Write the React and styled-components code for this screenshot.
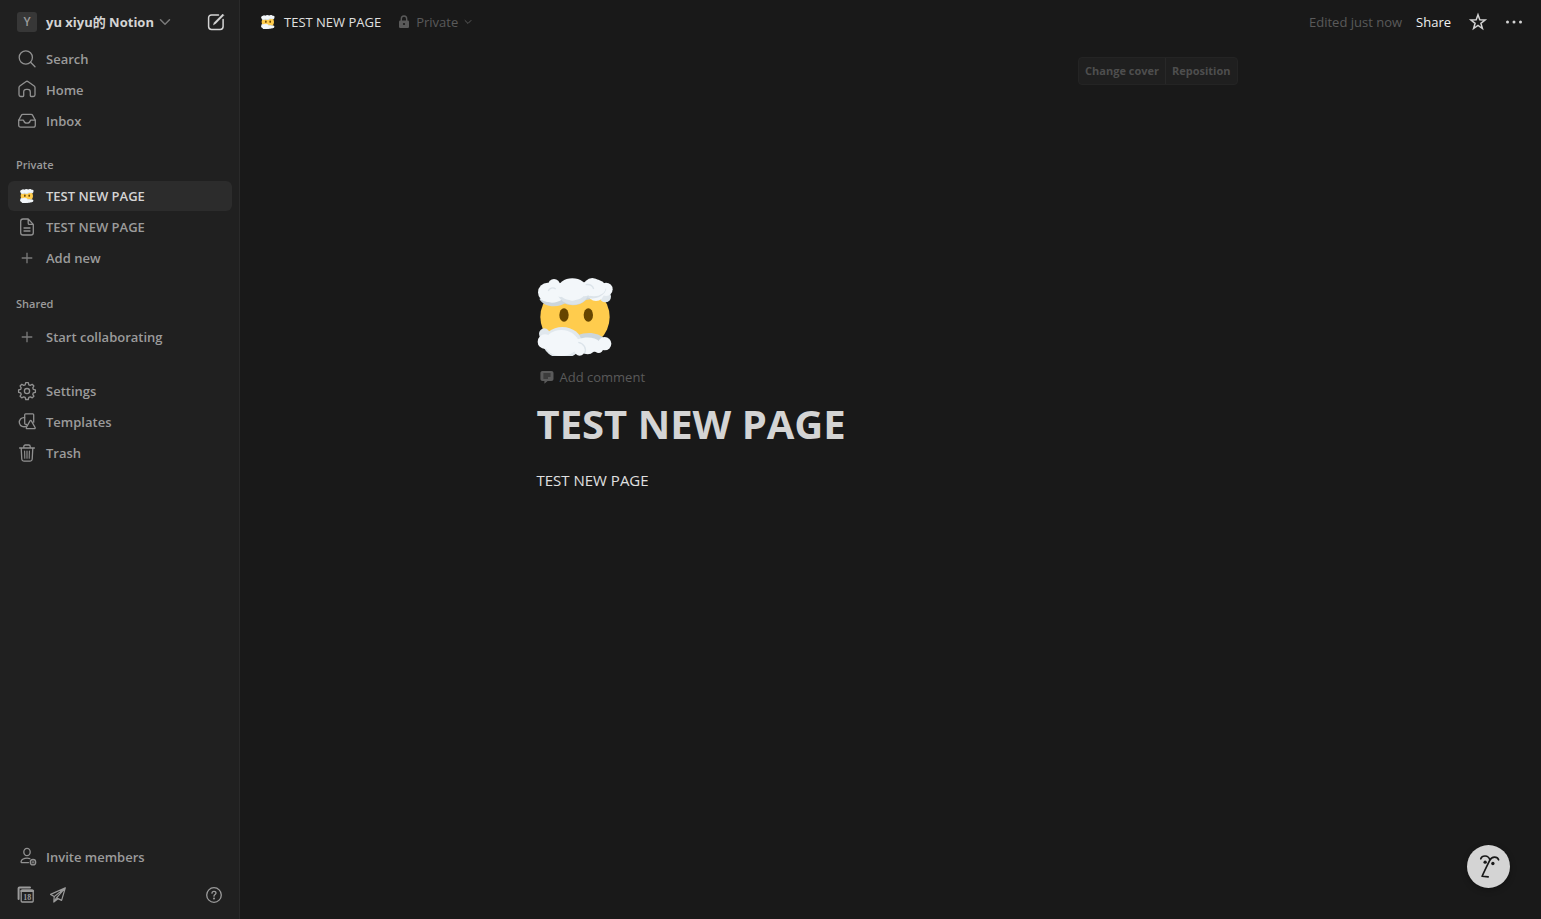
import React, {useState} from 'react';
import styled, {createGlobalStyle} from 'styled-components';

const GlobalStyle = createGlobalStyle`
    * {
        box-sizing: border-box;
    }

    body {
        margin: 0;
        background: #191919;
        color: #d4d4d4;
        font-family: "Open Sans", "Noto Sans CJK SC", sans-serif;
        font-size: 13px;
        line-height: 20px;
    }

    button {
        padding: 0;
        border: none;
        background: none;
        color: inherit;
        font: inherit;
        cursor: pointer;
    }

    svg {
        display: block;
        flex-shrink: 0;
    }
`

const Layout = styled.div`
    display: flex;
    min-height: 100vh;
`

const Sidebar = styled.aside`
    display: flex;
    flex-direction: column;
    flex-shrink: 0;
    width: 240px;
    padding: 0 7px 0 8px;
    border-right: 1px solid #2a2a2a;
    background: #202020;
    color: #9b9b9b;
`

const WorkspaceBar = styled.div`
    display: flex;
    align-items: center;
    justify-content: space-between;
    height: 44px;
    padding: 0 6px 0 9px;
    color: #d4d4d4;
`

const WorkspaceButton = styled.button`
    display: flex;
    align-items: center;
    font-weight: 700;
    white-space: nowrap;
`

const WorkspaceBadge = styled.span`
    width: 20px;
    height: 20px;
    margin-right: 9px;
    border-radius: 3px;
    background: #373737;
    color: #9b9b9b;
    font-size: 12px;
    font-weight: 600;
    text-align: center;
`

const Group = styled.nav`
    display: flex;
    flex-direction: column;
    gap: 1px;
    margin-bottom: ${props => props.$gap || 0}px;
`

const GroupTitle = styled.h2`
    margin: 0;
    padding: 5px 8px;
    padding-bottom: ${props => props.$loose ? 7 : 5}px;
    font-size: 11px;
    font-weight: 600;
    line-height: 20px;
`

const Item = styled.a`
    display: flex;
    align-items: center;
    gap: 8px;
    height: 30px;
    padding: 0 8px;
    border-radius: 6px;
    background: ${props => props.$active ? '#2c2c2c' : 'transparent'};
    color: ${props => props.$active ? '#d4d4d4' : '#9b9b9b'};
    font-weight: 600;
    text-decoration: none;
    white-space: nowrap;

    &:hover {
        background: #2c2c2c;
    }
`

const ItemIcon = styled.span`
    display: flex;
    align-items: center;
    justify-content: center;
    width: 22px;
    height: 22px;
    color: ${props => props.$dim ? '#7a7a7a' : '#919191'};
`

const SidebarBottom = styled.div`
    margin-top: auto;
`

const Tools = styled.div`
    display: flex;
    align-items: center;
    gap: 12px;
    height: 46px;
    padding: 0 8px;
    margin-bottom: 1px;
`

const HelpButton = styled.button`
    margin-left: auto;
`

const Main = styled.main`
    flex: 1;
    min-width: 0;
`

const Topbar = styled.header`
    display: flex;
    align-items: center;
    justify-content: space-between;
    height: 44px;
    padding: 0 17px 0 21px;
`

const Crumbs = styled.div`
    display: flex;
    align-items: center;
    gap: 17px;
`

const Crumb = styled.button`
    display: flex;
    align-items: center;
    gap: ${props => props.$muted ? 6 : 9}px;
    color: ${props => props.$muted ? '#5a5a5a' : '#e0e0e0'};
`

const Actions = styled.div`
    display: flex;
    align-items: center;
`

const Edited = styled.span`
    margin-right: 14px;
    color: #5a5a5a;
`

const ShareButton = styled.button`
    margin-right: 17px;
    color: #f0f0f0;
`

const StarButton = styled.button`
    margin-right: 16px;
`

const Column = styled.div`
    width: 100%;
    max-width: 708px;
    margin: 0 auto;
`

const CoverActions = styled.div`
    display: flex;
    justify-content: flex-end;
    padding: 13px 7px 0 0;
`

const CoverGroup = styled.div`
    display: flex;
    border: 1px solid #242424;
    border-radius: 4px;
    background: #1f1f1f;
`

const CoverButton = styled.button`
    height: 26px;
    padding: 0 6px;
    color: #4e4e4e;
    font-size: 11px;
    font-weight: 700;

    & + & {
        border-left: 1px solid #282828;
    }
`

const PageIcon = styled.div`
    margin: 193px 0 9px;
`

const CommentButton = styled.button`
    display: flex;
    align-items: center;
    gap: 6px;
    height: 24px;
    padding: 0 3px;
    color: #5a5a5a;
`

const PageTitle = styled.h1`
    margin: 11px 0 0;
    font-size: 40px;
    font-weight: 700;
    line-height: 48px;
`

const Paragraph = styled.p`
    margin: 20px 0 0;
    color: #e0e0e0;
    font-size: 15px;
    line-height: 24px;
`

const AssistantButton = styled.button`
    position: fixed;
    right: 31px;
    bottom: 31px;
    border-radius: 50%;
    box-shadow: 0 2px 6px rgba(0, 0, 0, 0.3);
`

const Icon = ({size = 20, children, ...rest}) => (
    <svg width={size} height={size} viewBox="0 0 20 20" fill="none" stroke="currentColor"
        strokeWidth="1.3" strokeLinecap="round" strokeLinejoin="round" aria-hidden="true" {...rest}>
        {children}
    </svg>
)

const SearchIcon = () => (
    <Icon>
        <circle cx="8.8" cy="8.500" r="6.600" />
        <path d="M13.600 13.300L18 17.700" />
    </Icon>
)

const HomeIcon = () => (
    <Icon>
        <path d="M2 7.600c0-.7.3-1.200.8-1.600l6-4.300c.7-.5 1.700-.5 2.400 0l6 4.300c.5.4.8.9.8 1.600v7.200c0 1-.7 1.700-1.700 1.700h-2.100c-.5 0-.9-.4-.9-.9v-3.700c0-1.600-1-2.600-2.600-2.600h-1.400c-1.600 0-2.600 1-2.600 2.600v3.700c0 .5-.4.9-.9.9H3.700C2.700 16.500 2 15.800 2 14.800z" />
    </Icon>
)

const InboxIcon = () => (
    <Icon>
        <path d="M1.700 9.200L4.300 4.400c.3-.6.9-1 1.600-1h8.200c.7 0 1.300.4 1.600 1l2.600 4.800v5c0 1.100-.8 1.900-1.900 1.900H3.600c-1.100 0-1.900-.8-1.900-1.900z" />
        <path d="M1.700 9.200h4.200c.5 0 .9.300 1 .8.300 1.300 1.500 2.200 3.100 2.200s2.800-.9 3.100-2.200c.1-.5.5-.8 1-.8h4.200" />
    </Icon>
)

const PageDocIcon = () => (
    <Icon>
        <path d="M11.200 2H6C4.700 2 3.700 3 3.700 4.300v11.400C3.700 17 4.700 18 6 18h8c1.300 0 2.300-1 2.300-2.300V7.400L11.200 2zM11.200 2v4.200c0 .7.500 1.200 1.200 1.200h3.900" />
        <path d="M7 11h6M7 14h6" />
    </Icon>
)

const PlusIcon = () => (
    <Icon>
        <path d="M10 4.700v10.600M4.700 10h10.600" strokeLinecap="butt" />
    </Icon>
)

// eight teeth around a ring
const GearIcon = () => (
    <Icon>
        <path d="M8.700 1.700h2.600l.5 2.100 1.500.6 1.900-1.100 1.700 1.700-1.100 1.900.6 1.500 2 .4v2.500l-2 .5-.6 1.500 1.100 1.900-1.700 1.700-1.900-1.100-1.500.6-.5 2.100H8.700l-.5-2.100-1.500-.6-1.900 1.100-1.700-1.700 1.100-1.900-.6-1.500-2-.5V8.800l2-.4.6-1.500-1.100-1.900 1.700-1.700 1.900 1.100 1.500-.6z" />
        <circle cx="10" cy="10.100" r="2.600" />
    </Icon>
)

const TemplatesIcon = () => (
    <Icon>
        <path d="M7.600 5.600A4.600 4.600 0 1 0 9.400 14" />
        <path d="M9.600 12.400H8.600c-.5 0-.9-.4-.9-.9V2.800c0-.5.4-.9.900-.9h7.200c.5 0 .9.400.9.900v7.400" />
        <path d="M13 8.900c.3-.6 1.100-.6 1.400 0l3.700 6.600c.3.600-.1 1.200-.7 1.200H10c-.6 0-1-.6-.7-1.200z" />
    </Icon>
)

const TrashIcon = () => (
    <Icon>
        <path d="M2.600 5h14.800M6.800 4.700V3.500c0-.9.600-1.500 1.500-1.500h3.400c.9 0 1.500.6 1.500 1.500v1.200M4.200 5.200l.6 11c.1 1.200.9 1.900 2.100 1.900h6.200c1.200 0 2-.7 2.100-1.900l.6-11" />
        <path d="M7.600 8l.2 7.200M10 8v7.200M12.400 8l-.2 7.200" strokeWidth="1.100" />
    </Icon>
)

const InviteIcon = () => (
    <Icon>
        <ellipse cx="10" cy="5" rx="3.200" ry="3.700" />
        <path d="M11.500 15.600H5c-.7 0-1.100-.5-.9-1.100.7-2.100 3-3.300 6-3.300 1 0 1.900.1 2.700.4" />
        <circle cx="16" cy="15.200" r="2.700" />
        <path d="M16 14v2.400M14.800 15.200h2.400" strokeWidth=".8" />
    </Icon>
)

const CalendarIcon = () => (
    <Icon>
        <path d="M2.600 14V3.300c0-.6.300-.9.900-.9h10.500" strokeWidth="2" />
        <rect x="5.200" y="5" width="12" height="12" rx="1" />
        <path d="M5.300 5.900h11.800" strokeWidth="2" />
        <text x="11.200" y="14.600" fontSize="8" fontWeight="700" fontFamily="Liberation Serif, serif"
            textAnchor="middle" fill="currentColor" stroke="none">18</text>
    </Icon>
)

const SendIcon = () => (
    <Icon strokeWidth="1.200">
        <path d="M17.300 2.800L2.600 9.400l3.600 2.200L17.300 2.800l-3.700 12.600-5.100-2.500zM6.200 11.600l-.4 5.400 2.700-4.100M5.800 17l4.200-3.300" />
    </Icon>
)

const HelpIcon = () => (
    <Icon>
        <circle cx="10" cy="10" r="7.300" />
        <path d="M8 8.200c0-1.200.8-1.900 2-1.900s2 .7 2 1.800c0 1.500-2 1.500-2 3.100" />
        <circle cx="10" cy="13.500" r=".4" fill="currentColor" />
    </Icon>
)

const ComposeIcon = () => (
    <Icon strokeWidth="1.500">
        <path d="M12.500 2.900H5.500C3.700 2.900 2.600 4 2.600 5.800v8.700c0 1.800 1.100 2.900 2.900 2.900h8.700c1.800 0 2.900-1.100 2.900-2.900V7.500" />
        <path d="M7.500 12.500l.8-2L16.700 2.100l1.200 1.200-8.400 8.400z" fill="currentColor" strokeWidth=".5" />
    </Icon>
)

const StarIcon = () => (
    <Icon strokeWidth="1.500" strokeLinejoin="miter">
        <path d="M10 2.800l1.800 5 5.300.2-4.200 3.300 1.500 5.200-4.400-3-4.400 3 1.500-5.200L2.900 8l5.300-.2z" />
    </Icon>
)

const DotsIcon = () => (
    <Icon fill="currentColor" stroke="none">
        <circle cx="3.500" cy="10" r="1.500" />
        <circle cx="10" cy="10" r="1.500" />
        <circle cx="16.500" cy="10" r="1.500" />
    </Icon>
)

const LockIcon = () => (
    <svg width="12" height="14" viewBox="0 0 12 14" aria-hidden="true">
        <path d="M3.300 6V4c0-1.900 1-3 2.700-3s2.700 1.100 2.700 3v2" fill="none" stroke="currentColor" strokeWidth="1.400" />
        <rect x="1" y="5.500" width="10" height="7.500" rx="1.200" fill="currentColor" />
        <circle cx="6" cy="9" r="1.100" fill="#191919" />
    </svg>
)

const Chevron = ({size}) => (
    <svg width={size} height={size} viewBox="0 0 12 12" fill="none" stroke="currentColor"
        strokeWidth="1.500" strokeLinecap="round" strokeLinejoin="round" aria-hidden="true">
        <path d="M1.500 3.700L6 8.200l4.500-4.500" />
    </svg>
)

const CommentIcon = () => (
    <svg width="14" height="14" viewBox="0 0 14 14" aria-hidden="true">
        <path d="M2.400 1h9.100C12.600 1 13.500 1.900 13.500 3v6c0 1.100-.9 2-2 2H7.600L4.400 13.700V11h-2C1.300 11 .4 10.100.4 9V3C.4 1.900 1.300 1 2.400 1z" fill="currentColor" />
        <path d="M3.400 4h7.200M3.400 6h7.200M3.400 8h4.600" stroke="#191919" strokeWidth=".9" />
    </svg>
)

const CloudFace = ({size}) => (
    <svg width={size} height={size} viewBox="15 18 234 234" role="img" aria-label="Face in clouds">
        <ellipse cx="129" cy="135" rx="104" ry="98" fill="#ffcc4d" />
        <ellipse cx="96" cy="129" rx="14" ry="20" fill="#664500" />
        <ellipse cx="169" cy="129" rx="14" ry="20" fill="#664500" />
        {/* cloud undersides */}
        <g fill="#ccd6dd">
            <path d="M22 80c12 26 56 30 84 10l-20-14z" />
            <path d="M82 82c22 25 60 22 80 2l50-8c5 6 9 10 13 6l-10-20-75-12z" />
            <path d="M137 190c30-12 64-8 82 12l-15 20-56-4z" />
        </g>
        <g fill="#e1e8ed">
            <circle cx="220" cy="74" r="17" />
            <circle cx="37" cy="185" r="16" />
            <ellipse cx="91" cy="212" rx="58" ry="47" />
        </g>
        <g fill="#f3f7fa">
            <circle cx="47" cy="61" r="29" />
            <circle cx="66" cy="39" r="18" />
            <circle cx="181" cy="45" r="27" />
            <circle cx="222" cy="52" r="20" />
            <circle cx="192" cy="63" r="24" />
            <path d="M34 82c12 13 38 14 58-1l8-25-54-10z" />
        </g>
        <g fill="#dce4ea">
            <path d="M74 62c14 44 76 48 94 10l-10-26z" />
            <path d="M165 76c21 10 54-4 58-26l-10-3z" />
        </g>
        <g fill="#f3f7fa">
            <ellipse cx="121" cy="52" rx="44" ry="33" />
            <circle cx="85" cy="54" r="21" />
            <circle cx="158" cy="52" r="21" />
            <ellipse cx="186" cy="47" rx="35" ry="26" />
            <circle cx="121" cy="67" r="19" />
        </g>
        <path d="M49 57c2-8 14-13 22-6M161 38c13-2 21 3 24 13" fill="none" stroke="#dce4ea" strokeWidth="4" />
        <g fill="#f3f7fa">
            <path d="M138 202c23-9 50-8 65 7l15 8-18 22h-65z" />
            <circle cx="218" cy="215" r="20" />
            <circle cx="200" cy="230" r="13" />
            <circle cx="167" cy="223" r="24" />
            <circle cx="39" cy="209" r="22" />
            <ellipse cx="88" cy="213" rx="50" ry="39" />
            <circle cx="116" cy="215" r="26" />
            <circle cx="143" cy="235" r="16" />
            <path d="M36 195h70l18 43-70 4z" />
        </g>
        <path d="M139 211c16 3 26 18 19 33" fill="none" stroke="#dce4ea" strokeWidth="4" />
    </svg>
)

const AssistantFace = () => (
    <svg width="43" height="43" viewBox="11 8 128 128" aria-hidden="true">
        <circle cx="75" cy="72" r="64" fill="#d4d4d4" />
        <g fill="none" stroke="#191919" strokeWidth="5" strokeLinecap="round" strokeLinejoin="round">
            <path d="M52 49c4-11 22-12 27 3" />
            <path d="M105 52c-4-11-20-11-26 1C71 69 63 85 56 101l18 2" />
        </g>
        <circle cx="65" cy="59" r="5" fill="#191919" />
        <circle cx="88" cy="63" r="5" fill="#191919" />
    </svg>
)

const mainLinks = [
    {id: 'search', label: 'Search', icon: <SearchIcon />},
    {id: 'home', label: 'Home', icon: <HomeIcon />},
    {id: 'inbox', label: 'Inbox', icon: <InboxIcon />}
]

const privateLinks = [
    {id: 'page-1', label: 'TEST NEW PAGE', icon: <CloudFace size={14} />},
    {id: 'page-2', label: 'TEST NEW PAGE', icon: <PageDocIcon />},
    {id: 'add', label: 'Add new', icon: <PlusIcon />, dim: true}
]

const sharedLinks = [
    {id: 'collaborate', label: 'Start collaborating', icon: <PlusIcon />, dim: true}
]

const settingLinks = [
    {id: 'settings', label: 'Settings', icon: <GearIcon />},
    {id: 'templates', label: 'Templates', icon: <TemplatesIcon />},
    {id: 'trash', label: 'Trash', icon: <TrashIcon />}
]

const Links = ({items, active, onSelect}) => items.map(item => (
    <Item key={item.id} href={`#${item.id}`} $active={active === item.id} onClick={() => onSelect(item.id)}>
        <ItemIcon $dim={item.dim}>{item.icon}</ItemIcon>
        {item.label}
    </Item>
))

const App = () => {
    const [active, setActive] = useState('page-1');

    return (
        <>
            <GlobalStyle />
            <Layout>
                <Sidebar>
                    <WorkspaceBar>
                        <WorkspaceButton>
                            <WorkspaceBadge>Y</WorkspaceBadge>
                            <span>yu xiyu的 Notion</span>
                            <ItemIcon $dim><Chevron size={12} /></ItemIcon>
                        </WorkspaceButton>
                        <button aria-label="New page"><ComposeIcon /></button>
                    </WorkspaceBar>
                    <Group $gap={14}>
                        <Links items={mainLinks} active={active} onSelect={setActive} />
                    </Group>
                    <Group $gap={16}>
                        <GroupTitle>Private</GroupTitle>
                        <Links items={privateLinks} active={active} onSelect={setActive} />
                    </Group>
                    <Group $gap={24}>
                        <GroupTitle $loose>Shared</GroupTitle>
                        <Links items={sharedLinks} active={active} onSelect={setActive} />
                    </Group>
                    <Group>
                        <Links items={settingLinks} active={active} onSelect={setActive} />
                    </Group>
                    <SidebarBottom>
                        <Item href="#invite">
                            <ItemIcon><InviteIcon /></ItemIcon>
                            Invite members
                        </Item>
                        <Tools>
                            <button aria-label="Calendar"><CalendarIcon /></button>
                            <button aria-label="Send"><SendIcon /></button>
                            <HelpButton aria-label="Help"><HelpIcon /></HelpButton>
                        </Tools>
                    </SidebarBottom>
                </Sidebar>
                <Main>
                    <Topbar>
                        <Crumbs>
                            <Crumb><CloudFace size={14} />TEST NEW PAGE</Crumb>
                            <Crumb $muted><LockIcon />Private<Chevron size={8} /></Crumb>
                        </Crumbs>
                        <Actions>
                            <Edited>Edited just now</Edited>
                            <ShareButton>Share</ShareButton>
                            <StarButton aria-label="Favorite"><StarIcon /></StarButton>
                            <button aria-label="More"><DotsIcon /></button>
                        </Actions>
                    </Topbar>
                    <Column>
                        <CoverActions>
                            <CoverGroup>
                                <CoverButton>Change cover</CoverButton>
                                <CoverButton>Reposition</CoverButton>
                            </CoverGroup>
                        </CoverActions>
                        <PageIcon><CloudFace size={78} /></PageIcon>
                        <CommentButton><CommentIcon />Add comment</CommentButton>
                        <PageTitle>TEST NEW PAGE</PageTitle>
                        <Paragraph>TEST NEW PAGE</Paragraph>
                    </Column>
                </Main>
            </Layout>
            <AssistantButton aria-label="Open assistant"><AssistantFace /></AssistantButton>
        </>
    )
}

export default App;
